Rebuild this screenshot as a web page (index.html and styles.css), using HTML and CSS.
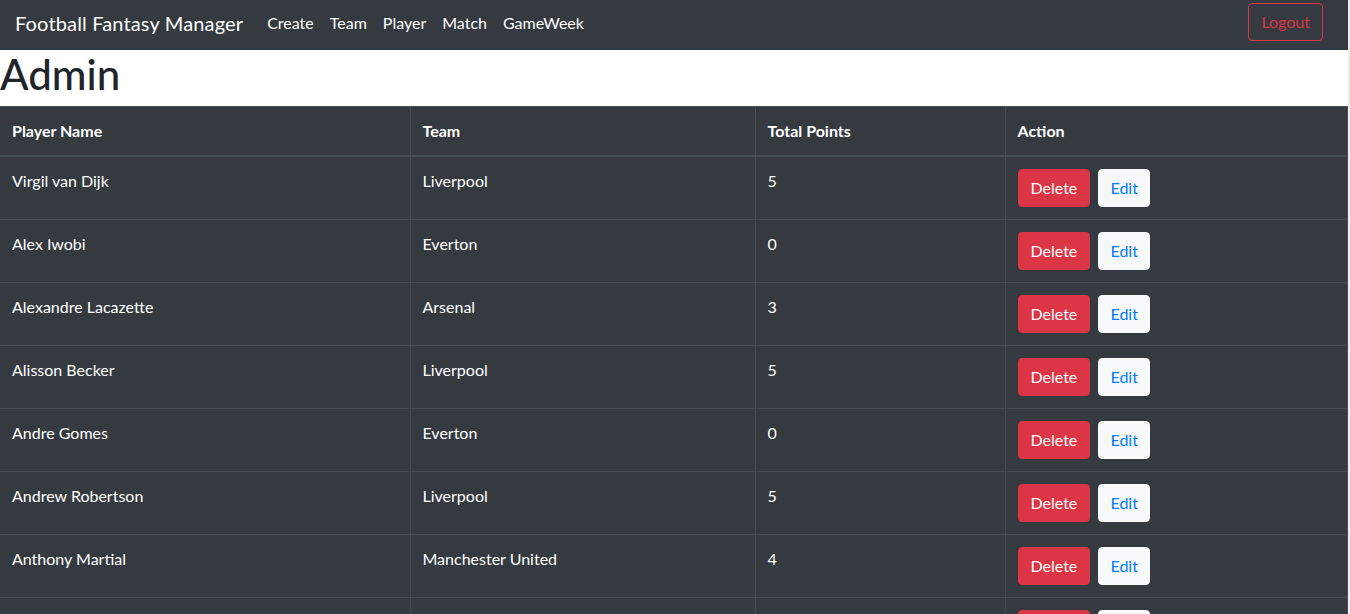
FILE: index.html
```html
<!DOCTYPE html>
<html lang="en">
<head>
<meta charset="utf-8">
<title>Football Fantasy Manager - Admin</title>
<link rel="stylesheet" href="styles.css">
</head>
<body>
<div class="page">
  <nav class="navbar">
    <a class="brand" href="#">Football Fantasy Manager</a>
    <ul class="nav-links">
      <li><a href="#">Create</a></li>
      <li><a href="#">Team</a></li>
      <li><a href="#">Player</a></li>
      <li><a href="#">Match</a></li>
      <li><a href="#">GameWeek</a></li>
    </ul>
    <button class="btn btn-outline-danger">Logout</button>
  </nav>
  <h1 class="title">Admin</h1>
  <table class="players">
    <colgroup>
      <col class="c-name"><col class="c-team"><col class="c-points"><col class="c-action">
    </colgroup>
    <thead>
      <tr><th>Player Name</th><th>Team</th><th>Total Points</th><th>Action</th></tr>
    </thead>
    <tbody>
      <tr><td>Virgil van Dijk</td><td>Liverpool</td><td>5</td><td><div class="actions"><button class="btn btn-danger">Delete</button><button class="btn btn-light">Edit</button></div></td></tr>
      <tr><td>Alex Iwobi</td><td>Everton</td><td>0</td><td><div class="actions"><button class="btn btn-danger">Delete</button><button class="btn btn-light">Edit</button></div></td></tr>
      <tr><td>Alexandre Lacazette</td><td>Arsenal</td><td>3</td><td><div class="actions"><button class="btn btn-danger">Delete</button><button class="btn btn-light">Edit</button></div></td></tr>
      <tr><td>Alisson Becker</td><td>Liverpool</td><td>5</td><td><div class="actions"><button class="btn btn-danger">Delete</button><button class="btn btn-light">Edit</button></div></td></tr>
      <tr><td>Andre Gomes</td><td>Everton</td><td>0</td><td><div class="actions"><button class="btn btn-danger">Delete</button><button class="btn btn-light">Edit</button></div></td></tr>
      <tr><td>Andrew Robertson</td><td>Liverpool</td><td>5</td><td><div class="actions"><button class="btn btn-danger">Delete</button><button class="btn btn-light">Edit</button></div></td></tr>
      <tr><td>Anthony Martial</td><td>Manchester United</td><td>4</td><td><div class="actions"><button class="btn btn-danger">Delete</button><button class="btn btn-light">Edit</button></div></td></tr>
      <tr><td class="offscreen">Ashley Young</td><td class="offscreen">Manchester United</td><td class="offscreen">2</td><td><div class="actions"><button class="btn btn-danger">Delete</button><button class="btn btn-light">Edit</button></div></td></tr>
    </tbody>
  </table>
</div>
</body>
</html>
```

FILE: styles.css
```css
html {
  background: #ededed;
}
body {
  margin: 0;
  font-family: Lato, "Noto Sans", sans-serif;
  font-size: 16px;
  line-height: 24px;
  color: #212529;
}
.page {
  width: 1348px;
  background: #fff;
}
.navbar {
  height: 50px;
  background: #343a40;
  display: flex;
  align-items: center;
  padding: 0 25px 0 15px;
  box-sizing: border-box;
}
.brand {
  color: #fff;
  font-size: 20px;
  text-decoration: none;
  margin-right: 16px;
  margin-top: -4px;
  letter-spacing: 0.15px;
}
.nav-links {
  display: flex;
  list-style: none;
  margin: -4px 0 0;
  padding: 0;
  flex: 1;
}
.nav-links a {
  display: block;
  color: #fff;
  text-decoration: none;
  padding: 8px 8px;
}
.btn {
  font-family: inherit;
  font-size: 16px;
  line-height: 24px;
  padding: 6px 12px;
  border: 1px solid transparent;
  border-radius: 4px;
  cursor: pointer;
}
.btn-outline-danger {
  background: transparent;
  color: #dc3545;
  border-color: #dc3545;
  margin-top: -6px;
  height: 38px;
  padding: 5px 12px;
}
.btn-danger {
  background: #dc3545;
  color: #fff;
  border-color: #dc3545;
  width: 72px;
}
.btn-light {
  background: #f8f9fa;
  color: #007bff;
  border-color: #f8f9fa;
  width: 52px;
}
.title {
  margin: 0 0 8px;
  font-size: 42px;
  line-height: 48px;
  font-weight: 500;
  color: #212529;
}
.players {
  width: 100%;
  border-collapse: collapse;
  background: #343a40;
  color: #fff;
  table-layout: fixed;
}
.c-name { width: 410px; }
.c-team { width: 345px; }
.c-points { width: 250px; }
.players th,
.players td {
  border: 1px solid #454d55;
  padding: 12px;
  text-align: left;
  vertical-align: top;
}
.players th:first-child,
.players td:first-child {
  border-left: 0;
}
.players th {
  font-weight: 700;
  border-bottom-width: 2px;
}
.players td {
  height: 38px;
}
.players td.offscreen {
  padding-top: 18px;
}
.players td .actions {
  display: flex;
  gap: 8px;
}
```
